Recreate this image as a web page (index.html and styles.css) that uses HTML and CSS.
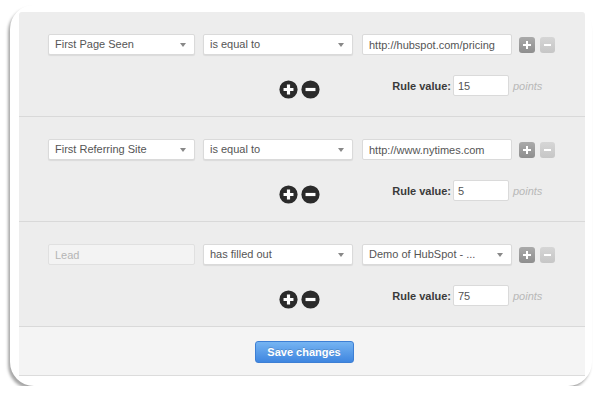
FILE: index.html
```html
<!DOCTYPE html>
<html lang="en">
<head>
  <meta charset="UTF-8" />
  <title>Lead scoring rules</title>
  <link rel="stylesheet" href="styles.css">
</head>
<body>

  <div class="frame">
    <div class="panel">

      <div class="rule">
        <div class="row">
          <div class="select field-a">First Page Seen</div>
          <div class="select field-b">is equal to</div>
          <input class="text field-c" type="text" value="http://hubspot.com/pricing">
          <span class="sq sq-plus"></span>
          <span class="sq sq-minus"></span>
        </div>
        <div class="row value-row">
          <span class="circles">
            <svg class="circ" viewBox="0 0 18 18"><circle cx="9" cy="9" r="8.6" fill="#2b2b2b"/><path d="M9 4.3v9.4M4.3 9h9.4" stroke="#fff" stroke-width="3"/></svg>
            <svg class="circ" viewBox="0 0 18 18"><circle cx="9" cy="9" r="8.6" fill="#2b2b2b"/><path d="M4.3 9h9.4" stroke="#fff" stroke-width="3"/></svg>
          </span>
          <label class="value-label">Rule value:</label>
          <input class="text points-input" type="text" value="15">
          <span class="points">points</span>
        </div>
      </div>

      <div class="rule">
        <div class="row">
          <div class="select field-a">First Referring Site</div>
          <div class="select field-b">is equal to</div>
          <input class="text field-c" type="text" value="http://www.nytimes.com">
          <span class="sq sq-plus"></span>
          <span class="sq sq-minus"></span>
        </div>
        <div class="row value-row">
          <span class="circles">
            <svg class="circ" viewBox="0 0 18 18"><circle cx="9" cy="9" r="8.6" fill="#2b2b2b"/><path d="M9 4.3v9.4M4.3 9h9.4" stroke="#fff" stroke-width="3"/></svg>
            <svg class="circ" viewBox="0 0 18 18"><circle cx="9" cy="9" r="8.6" fill="#2b2b2b"/><path d="M4.3 9h9.4" stroke="#fff" stroke-width="3"/></svg>
          </span>
          <label class="value-label">Rule value:</label>
          <input class="text points-input" type="text" value="5">
          <span class="points">points</span>
        </div>
      </div>

      <div class="rule">
        <div class="row">
          <input class="text field-a disabled" type="text" placeholder="Lead" disabled>
          <div class="select field-b">has filled out</div>
          <div class="select field-c">Demo of HubSpot - ...</div>
          <span class="sq sq-plus"></span>
          <span class="sq sq-minus"></span>
        </div>
        <div class="row value-row">
          <span class="circles">
            <svg class="circ" viewBox="0 0 18 18"><circle cx="9" cy="9" r="8.6" fill="#2b2b2b"/><path d="M9 4.3v9.4M4.3 9h9.4" stroke="#fff" stroke-width="3"/></svg>
            <svg class="circ" viewBox="0 0 18 18"><circle cx="9" cy="9" r="8.6" fill="#2b2b2b"/><path d="M4.3 9h9.4" stroke="#fff" stroke-width="3"/></svg>
          </span>
          <label class="value-label">Rule value:</label>
          <input class="text points-input" type="text" value="75">
          <span class="points">points</span>
        </div>
      </div>

      <div class="footer">
        <button class="save">Save changes</button>
      </div>

    </div>
  </div>

</body>
</html>
```

FILE: styles.css
```css
body {
  margin: 0;
  padding: 0;
  background: #fff;
  font-family: "Liberation Sans", Arial, sans-serif;
  font-size: 11px;
  color: #555;
}

.frame {
  width: 566px;
  height: 364px;
  margin: 5px 0 0 10px;
  padding: 7px 7px 10px 9px;
  background: #fff;
  border-radius: 24px;
  box-shadow: -2px 3px 3px rgba(0,0,0,0.35);
}

.panel {
  height: 364px;
  background: #ededed;
  border-bottom: 1px solid #dcdcdc;
  border-radius: 3px 3px 0 0;
  box-sizing: border-box;
}

.rule {
  height: 105px;
  box-sizing: border-box;
  padding: 22px 0 0 29px;
  border-bottom: 1px solid #d9d9d9;
}

.row {
  display: flex;
  align-items: center;
  height: 21px;
}

.select,
.text {
  box-sizing: border-box;
  height: 21px;
  background: #fff;
  border: 1px solid #dadada;
  border-radius: 2px;
  font-family: "Liberation Sans", Arial, sans-serif;
  font-size: 11px;
  color: #555;
  padding: 0 6px;
  margin: 0;
}

.select {
  position: relative;
  line-height: 19px;
  box-shadow: 0 1px 1px rgba(0,0,0,0.08);
}

.select::after {
  content: "";
  position: absolute;
  right: 8px;
  top: 8px;
  border-left: 3px solid transparent;
  border-right: 3px solid transparent;
  border-top: 4px solid #888;
}

.text {
  outline: none;
}

.field-a { width: 147px; }
.field-b { width: 150px; margin-left: 8px; }
.field-c { width: 150px; margin-left: 9px; }

.disabled {
  background: #f3f3f3;
  border-color: #e0e0e0;
}

.disabled::placeholder {
  color: #b5b5b5;
}

.sq {
  width: 16px;
  height: 16px;
  border-radius: 3px;
  position: relative;
}

.sq-plus {
  margin-left: 7px;
  background: linear-gradient(#aaa, #8e8e8e);
}

.sq-minus {
  margin-left: 5px;
  width: 15px;
  background: linear-gradient(#d6d6d6, #c6c6c6);
}

.sq::before,
.sq-plus::after {
  content: "";
  position: absolute;
  background: #fff;
  left: 4px;
  top: 7px;
  width: 8px;
  height: 2px;
}

.sq-minus::before {
  left: 4px;
  width: 7px;
}

.sq-plus::after {
  left: 7px;
  top: 4px;
  width: 2px;
  height: 8px;
}

.value-row {
  margin-top: 20px;
  padding-left: 231px;
}

.circles {
  display: flex;
  gap: 3px;
  margin-top: 8px;
}

.circ {
  width: 19px;
  height: 19px;
  display: block;
}

.value-label {
  width: 131px;
  text-align: right;
  padding-right: 2px;
  font-weight: bold;
  color: #3a3a3a;
}

.points-input {
  width: 56px;
  padding: 0 4px;
}

.points {
  margin-left: 4px;
  font-style: italic;
  color: #b8b8b8;
}

.footer {
  background: #f4f4f4;
  height: 48px;
  box-sizing: border-box;
  padding-top: 14px;
  display: flex;
  justify-content: center;
}

.save {
  width: 99px;
  height: 22px;
  margin-left: 4px;
  border: 1px solid #3d7fd4;
  border-radius: 3px;
  background: linear-gradient(#75b4f2, #3f86e0);
  color: #fff;
  font-family: "Liberation Sans", Arial, sans-serif;
  font-size: 11px;
  font-weight: bold;
  text-shadow: 0 -1px 0 rgba(0,0,0,0.15);
  cursor: pointer;
}
```
